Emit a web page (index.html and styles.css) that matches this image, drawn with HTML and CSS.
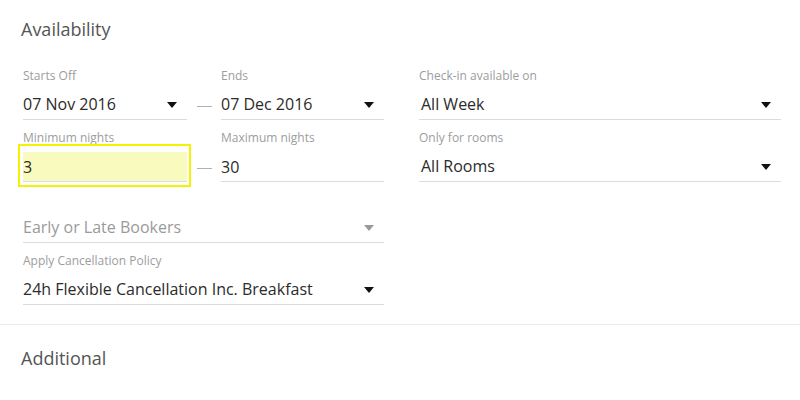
FILE: index.html
```html
<!DOCTYPE html>
<html lang="en">
<head>
<meta charset="utf-8">
<title>Availability</title>
<link rel="stylesheet" href="styles.css">
</head>
<body>
<section class="section section-first">
  <h2 class="heading">Availability</h2>
  <div class="form">
    <div class="field c1">
      <div class="label">Starts Off</div>
      <div class="control"><span class="value">07 Nov 2016</span><span class="caret"></span></div>
    </div>
    <div class="dash-cell c2"><span class="dash"></span></div>
    <div class="field c3">
      <div class="label">Ends</div>
      <div class="control"><span class="value">07 Dec 2016</span><span class="caret"></span></div>
    </div>
    <div class="field c5">
      <div class="label">Check-in available on</div>
      <div class="control"><span class="value shift">All Week</span><span class="caret"></span></div>
    </div>

    <div class="field c1">
      <div class="label">Minimum nights</div>
      <div class="control text focused"><span class="value">3</span></div>
    </div>
    <div class="dash-cell c2"><span class="dash"></span></div>
    <div class="field c3">
      <div class="label">Maximum nights</div>
      <div class="control text"><span class="value">30</span></div>
    </div>
    <div class="field c5">
      <div class="label">Only for rooms</div>
      <div class="control"><span class="value shift">All Rooms</span><span class="caret"></span></div>
    </div>

    <div class="field wide">
      <div class="label"></div>
      <div class="control"><span class="value placeholder">Early or Late Bookers</span><span class="caret muted"></span></div>
    </div>

    <div class="field wide">
      <div class="label">Apply Cancellation Policy</div>
      <div class="control"><span class="value">24h Flexible Cancellation Inc. Breakfast</span><span class="caret"></span></div>
    </div>
  </div>
</section>
<section class="section section-second">
  <h2 class="heading">Additional</h2>
</section>
</body>
</html>
```
FILE: styles.css
```css
* {
  box-sizing: border-box;
}

html, body {
  margin: 0;
  padding: 0;
  background: #ffffff;
}

body {
  font-family: "Open Sans", "Noto Sans", sans-serif;
  color: #333333;
  width: 800px;
  height: 400px;
  overflow: hidden;
}

.section {
  padding: 0 19px 0 23px;
}

.section-first {
  padding-top: 17px;
  padding-bottom: 19.2px;
}

.section-second {
  border-top: 1px solid #e9ecee;
  padding-top: 21px;
}

.heading {
  margin: 0 0 0 -2px;
  font-size: 18px;
  line-height: 24px;
  font-weight: 400;
  color: #555555;
}

.section-first .heading {
  margin-bottom: 26.3px;
}

.form {
  display: grid;
  grid-template-columns: 164px 34px 163px 35px 362px;
  row-gap: 8.5px;
}

.c1 { grid-column: 1; }
.c2 { grid-column: 2; }
.c3 { grid-column: 3; }
.c5 { grid-column: 5; }
.wide { grid-column: 1 / 4; }

.field {
  display: flex;
  flex-direction: column;
}

.label {
  height: 17px;
  padding-top: 1px;
  font-size: 12px;
  line-height: 16px;
  color: #9d9d9d;
  white-space: nowrap;
}

.control {
  position: relative;
  margin-top: 6px;
  height: 30px;
  border-bottom: 1px solid #dcdcdc;
  display: flex;
  align-items: flex-start;
}

.value {
  flex: 1;
  padding-top: 2px;
  font-size: 16px;
  line-height: 24px;
  color: #2b2b2b;
  white-space: nowrap;
}

.value.shift {
  padding-left: 2px;
}

.placeholder {
  color: #9a9a9a;
}

.caret {
  width: 0;
  height: 0;
  margin-top: 12px;
  margin-right: 10px;
  border-left: 5px solid transparent;
  border-right: 5px solid transparent;
  border-top: 6px solid #111111;
}

.caret.muted {
  border-top-color: #9a9a9a;
}

.control.text .value {
  padding-top: 1px;
  line-height: 29px;
}

.control.focused {
  background: #f8fbbd;
}

.control.focused::after {
  content: "";
  position: absolute;
  left: -5px;
  right: -4px;
  top: -8px;
  bottom: -6px;
  border: 2px solid #f5f200;
  pointer-events: none;
}

.dash-cell {
  display: flex;
  align-items: flex-end;
}

.dash {
  display: block;
  width: 15px;
  height: 1px;
  margin-left: 10px;
  margin-bottom: 13px;
  background: #a8b4ba;
}
```
